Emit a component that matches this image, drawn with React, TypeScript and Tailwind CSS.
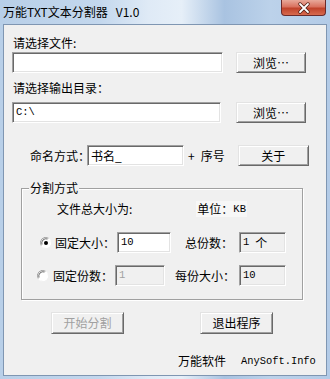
import React from "react";

const cjk = "font-['Noto_Sans_CJK_SC','Noto_Sans',sans-serif]";
const mono = "font-['Liberation_Mono','Noto_Sans_CJK_SC',monospace]";

function Btn({ children, className = "", disabled = false }: { children: React.ReactNode; className?: string; disabled?: boolean }) {
  return (
    <div
      className={`flex items-center justify-center h-[21px] bg-[#f0f0f0] border border-t-[#e3e3e3] border-l-[#e3e3e3] border-r-[#696969] border-b-[#696969] shadow-[inset_1px_1px_0_#ffffff,inset_-1px_-1px_0_#a0a0a0] text-[12px] leading-none whitespace-nowrap ${disabled ? "text-[#a0a0a0]" : "text-black"} ${className}`}
    >
      {children}
    </div>
  );
}

function Field({ children, className = "", gray = false }: { children?: React.ReactNode; className?: string; gray?: boolean }) {
  return (
    <div
      className={`flex items-center shrink-0 pl-[3px] h-[21px] border border-t-[#a0a0a0] border-l-[#a0a0a0] border-r-[#ffffff] border-b-[#ffffff] shadow-[inset_1px_1px_0_#696969,inset_-1px_-1px_0_#e3e3e3] whitespace-nowrap ${gray ? "bg-[#f0f0f0]" : "bg-white"} ${className}`}
    >
      {children}
    </div>
  );
}

function Radio({ checked }: { checked: boolean }) {
  return (
    <svg width="12" height="12" viewBox="0 0 12 12" className="shrink-0">
      <circle cx="6" cy="6" r="5.5" fill="#ffffff" />
      <path d="M1.2 8.5 A5.3 5.3 0 0 1 8.5 1.2" stroke="#a0a0a0" strokeWidth="1" fill="none" />
      <path d="M2 7.5 A4.3 4.3 0 0 1 7.5 2" stroke="#696969" strokeWidth="1" fill="none" />
      <path d="M3.5 10.8 A5.3 5.3 0 0 0 10.8 3.5" stroke="#f0f0f0" strokeWidth="1" fill="none" />
      {checked && <circle cx="6" cy="6" r="2" fill="#000000" />}
    </svg>
  );
}

export default function App() {
  return (
    <div className={`w-[330px] h-[379px] overflow-hidden flex flex-col bg-[linear-gradient(90deg,#b8cfe8_0%,#c3d7ed_30%,#dfeaf6_45%,#e6eff8_55%,#a9c3e1_68%,#bcd2ea_82%,#b3cbe7_100%)] ${cjk}`}>
      {/* title bar */}
      <div className="relative h-[24px] shrink-0 flex items-center pl-[3px]">
        <span className="text-[12px] leading-none text-black whitespace-nowrap">万能TXT文本分割器&nbsp;&nbsp;&nbsp;V1.0</span>
        <div className="absolute right-[4px] top-0 w-[45px] h-[16px] rounded-b-[4px] border border-t-0 border-[#6b2b2b] bg-[linear-gradient(180deg,#e8a99a_0%,#d9725f_45%,#c0432b_55%,#d76a4e_100%)] flex items-center justify-center">
          <svg width="14" height="12" viewBox="0 0 14 12">
            <path d="M3 2 L11 10 M11 2 L3 10" stroke="#4a1a12" strokeWidth="3.2" strokeLinecap="round" />
            <path d="M3 2 L11 10 M11 2 L3 10" stroke="#ffffff" strokeWidth="1.8" strokeLinecap="round" />
          </svg>
        </div>
      </div>
      {/* client area */}
      <div className="mx-[3px] h-[352px] bg-[#f0f0f0] border border-[#7f96b2] flex flex-col text-[12px] text-black leading-none whitespace-nowrap">
        <div className="pl-[9px] mt-[12px] h-[12px]">请选择文件:</div>
        <div className="flex items-center mt-[3px] pl-[8px]">
          <Field className="w-[211px]" />
          <Btn className="w-[70px] ml-[13px]">浏览…</Btn>
        </div>
        <div className="pl-[9px] mt-[9px] h-[12px]">请选择输出目录：</div>
        <div className="flex items-center mt-[8px] pl-[8px]">
          <Field className="w-[209px]">
            <span className={`${mono} text-[10.5px]`}>C:\</span>
          </Field>
          <Btn className="w-[70px] ml-[15px]">浏览…</Btn>
        </div>
        <div className="flex items-center mt-[22px] pl-[26px]">
          <span className="w-[57px] shrink-0 whitespace-nowrap">命名方式：</span>
          <Field className="w-[97px]">书名_</Field>
          <span className="ml-[4px]">+</span>
          <span className="ml-[6px]">序号</span>
          <Btn className="w-[71px] ml-[13px]">关于</Btn>
        </div>
        {/* group box */}
        <div className="relative mt-[22px] ml-[17px] w-[282px] h-[112px] border border-[#a0a0a0] shadow-[inset_1px_1px_0_#ffffff,1px_1px_0_#ffffff] flex flex-col">
          <span className="absolute left-[7px] top-[-7px] px-[1px] bg-[#f0f0f0]">分割方式</span>
          <div className="flex items-center mt-[12px] h-[16px]">
            <span className="ml-[35px]">文件总大小为:</span>
            <span className="ml-[64px] h-[16px] px-[1px] bg-[#f7f7f7] flex items-center">
              单位：<span className={`${mono} text-[10.5px]`}>KB</span>
            </span>
          </div>
          <div className="flex items-center mt-[15px]">
            <div className="ml-[18px]"><Radio checked /></div>
            <span className="ml-[3px] w-[62px] shrink-0">固定大小：</span>
            <Field className="w-[54px]">
              <span className={`${mono} text-[10.5px]`}>10</span>
            </Field>
            <span className="ml-[14px] w-[54px] shrink-0">总份数：</span>
            <Field className="w-[47px]" gray>
              <span className={`${mono} text-[10.5px]`}>1</span>
              <span className="ml-[6px]">个</span>
            </Field>
          </div>
          <div className="flex items-center mt-[12px]">
            <div className="ml-[15px]"><Radio checked={false} /></div>
            <span className="ml-[4px] w-[62px] shrink-0">固定份数：</span>
            <Field className="w-[50px]" gray>
              <span className={`${mono} text-[10.5px] text-[#a0a0a0]`}>1</span>
            </Field>
            <span className="ml-[10px] w-[64px] shrink-0">每份大小：</span>
            <Field className="w-[47px]" gray>
              <span className={`${mono} text-[10.5px]`}>10</span>
            </Field>
          </div>
        </div>
        <div className="flex items-center mt-[12px]">
          <Btn disabled className="w-[73px] h-[22px] ml-[47px]">开始分割</Btn>
          <Btn className="w-[73px] h-[22px] ml-[76px]">退出程序</Btn>
        </div>
        <div className="flex items-center mt-[21px] ml-[174px]">
          <span>万能软件</span>
          <span className={`${mono} text-[10.4px] ml-[15px]`}>AnySoft.Info</span>
        </div>
      </div>
    </div>
  );
}
